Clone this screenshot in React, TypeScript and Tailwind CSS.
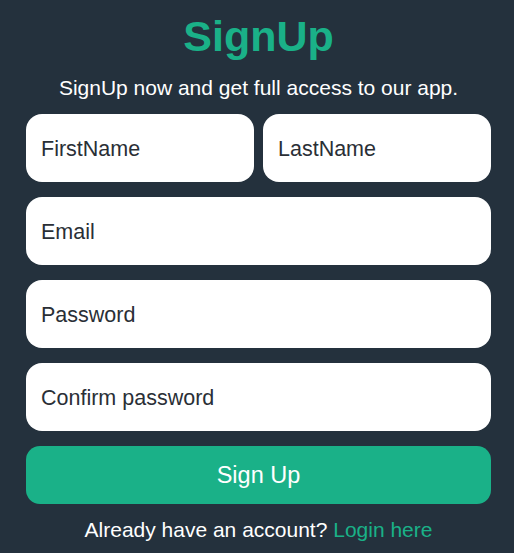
export default function App() {
  return (
    <div className="min-h-[553px] bg-[#24313d] pl-[26px] pr-[23px] pt-[12px] pb-4 font-['Liberation_Sans',Arial,sans-serif]">
      <h1 className="text-center text-[43px] font-bold leading-[48px] text-[#1ab188]">SignUp</h1>
      <p className="mt-[16px] text-center text-[21px] leading-[24px] text-white">
        SignUp now and get full access to our app.
      </p>
      <form className="mt-[14px] flex flex-col gap-[15px]" onSubmit={e => e.preventDefault()}>
        <div className="flex gap-[9px]">
          <input placeholder="FirstName"
            className="h-[68px] w-full min-w-0 rounded-[16px] bg-white px-[15px] pt-[2px] text-[21.5px] text-[#24313d] placeholder:text-[#2a2f36] outline-none" />
          <input placeholder="LastName"
            className="h-[68px] w-full min-w-0 rounded-[16px] bg-white px-[15px] pt-[2px] text-[21.5px] text-[#24313d] placeholder:text-[#2a2f36] outline-none" />
        </div>
        <input placeholder="Email" type="email"
          className="h-[68px] w-full rounded-[16px] bg-white px-[15px] pt-[2px] text-[21.5px] text-[#24313d] placeholder:text-[#2a2f36] outline-none" />
        <input placeholder="Password" type="password"
          className="h-[68px] w-full rounded-[16px] bg-white px-[15px] pt-[2px] text-[21.5px] text-[#24313d] placeholder:text-[#2a2f36] outline-none" />
        <input placeholder="Confirm password" type="password"
          className="h-[68px] w-full rounded-[16px] bg-white px-[15px] pt-[2px] text-[21.5px] text-[#24313d] placeholder:text-[#2a2f36] outline-none" />
        <button type="submit"
          className="h-[58px] w-full rounded-[14px] bg-[#1ab188] pt-[2px] text-[23.5px] text-white">
          Sign Up
        </button>
      </form>
      <p className="mt-[14px] text-center text-[21px] leading-[24px] text-white">
        Already have an account? <a href="#" className="text-[#1ab188]">Login here</a>
      </p>
    </div>
  )
}
